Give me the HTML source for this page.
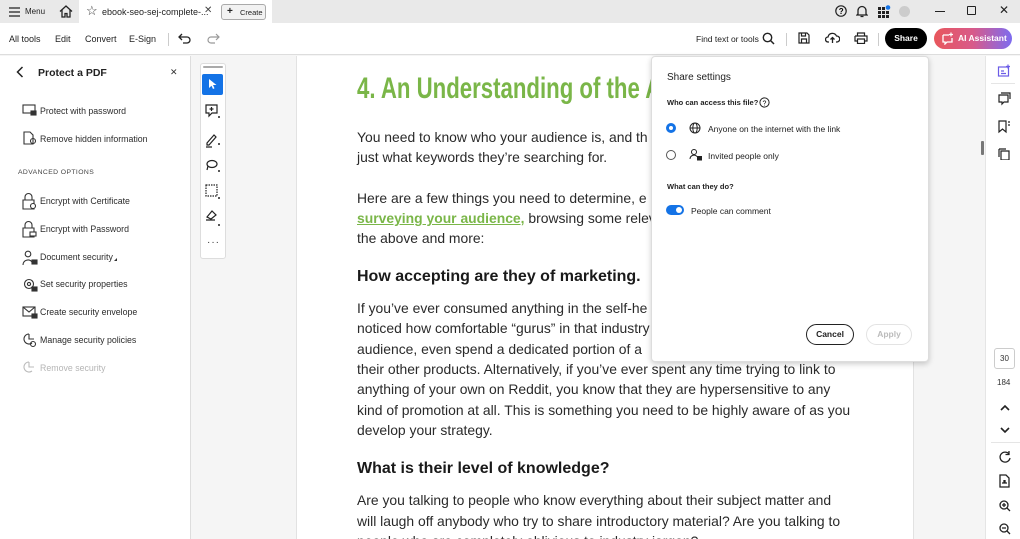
<!DOCTYPE html>
<html><head><meta charset="utf-8"><style>
*{margin:0;padding:0;box-sizing:border-box}
html,body{width:1020px;height:539px;overflow:hidden}
body{position:relative;font-family:"Liberation Sans",sans-serif;background:#f5f5f5;color:#222}
.a{position:absolute;white-space:nowrap}
.t{font-size:8.5px;color:#222}
.s{font-size:8.8px;color:#2c2c2c}
.p{font-size:13.9px;color:#2a2a2a}
.h{font-size:16px;font-weight:bold;color:#1a1a1a}
svg{position:absolute}
</style></head><body>
<div class="a" style="left:0;top:0;width:1020px;height:23px;background:#e9e9e9"></div>
<div class="a" style="left:79px;top:0;width:193px;height:23px;background:#fff"></div>
<svg style="left:9px;top:7px" width="12" height="10"><path d="M0 1h11M0 5h11M0 9h11" stroke="#222" stroke-width="1.3"/></svg>
<div class="a t" style="left:25px;top:7px;font-size:8px">Menu</div>
<svg style="left:59px;top:5px" width="14" height="13"><path d="M1 6.5L7 1l6 5.5M3 5v7h3V8.5h2V12h3V5" fill="none" stroke="#222" stroke-width="1.3"/></svg>
<div class="a" style="left:86px;top:3px;font-size:13px;color:#333">☆</div>
<div class="a t" style="left:102px;top:7px;font-size:9px">ebook-seo-sej-complete-...</div>
<div class="a" style="left:204px;top:5px;font-size:10px;color:#444">✕</div>
<div class="a" style="left:221px;top:4px;width:45px;height:16px;border:1px solid #aaa;border-radius:3px;background:#f2f2f2"></div>
<div class="a t" style="left:227px;top:6px;font-size:10px;font-weight:bold">+</div>
<div class="a t" style="left:240px;top:8px;font-size:7.5px">Create</div>
<svg style="left:835px;top:5px" width="12" height="12"><circle cx="6" cy="6" r="5.2" fill="none" stroke="#222" stroke-width="1.2"/><text x="3.7" y="9" font-size="8" font-family="Liberation Sans" font-weight="bold">?</text></svg>
<svg style="left:856px;top:5px" width="12" height="13"><path d="M2 9V5.5a4 4 0 0 1 8 0V9l1 1H1zM4.5 11.5h3" fill="none" stroke="#222" stroke-width="1.3"/></svg>
<svg style="left:878px;top:5px" width="13" height="13"><g fill="#222"><rect x="0" y="2" width="3" height="3"/><rect x="4" y="2" width="3" height="3"/><rect x="0" y="6" width="3" height="3"/><rect x="4" y="6" width="3" height="3"/><rect x="8" y="6" width="3" height="3"/><rect x="0" y="10" width="3" height="3"/><rect x="4" y="10" width="3" height="3"/><rect x="8" y="10" width="3" height="3"/></g><circle cx="10" cy="2.5" r="2.3" fill="#1473e6"/></svg>
<div class="a" style="left:899px;top:6px;width:11px;height:11px;border-radius:50%;background:#ccc"></div>
<div class="a" style="left:935px;top:11px;width:10px;height:1.2px;background:#222"></div>
<div class="a" style="left:967px;top:6px;width:9px;height:9px;border:1.2px solid #222;border-radius:1px"></div>
<div class="a" style="left:999px;top:3px;font-size:12px;color:#222">✕</div>
<div class="a" style="left:0;top:23px;width:1020px;height:32px;background:#fff;border-bottom:1px solid #ddd"></div>
<div class="a t" style="left:9px;top:34px;font-size:9px">All tools</div>
<div class="a t" style="left:55px;top:34px;font-size:9px">Edit</div>
<div class="a t" style="left:85px;top:34px;font-size:9px">Convert</div>
<div class="a t" style="left:129px;top:34px;font-size:9px">E-Sign</div>
<div class="a" style="left:168px;top:33px;width:1px;height:13px;background:#ccc"></div>
<svg style="left:178px;top:33px" width="14" height="11"><path d="M4 1L1 4l3 3M1 4h8a3 3 0 0 1 0 6H5" fill="none" stroke="#222" stroke-width="1.3"/></svg>
<svg style="left:206px;top:33px" width="14" height="11"><path d="M10 1l3 3-3 3M13 4H5a3 3 0 0 0 0 6h4" fill="none" stroke="#999" stroke-width="1.2"/></svg>
<div class="a t" style="left:696px;top:34px;font-size:8.5px">Find text or tools</div>
<svg style="left:762px;top:32px" width="13" height="13"><circle cx="5.5" cy="5.5" r="4.2" fill="none" stroke="#222" stroke-width="1.4"/><path d="M8.5 8.5l3.5 3.5" stroke="#222" stroke-width="1.5"/></svg>
<div class="a" style="left:786px;top:33px;width:1px;height:13px;background:#ccc"></div>
<svg style="left:798px;top:32px" width="12" height="12"><path d="M1 1h8l2 2v8H1zM3.5 1v3h4V1M3.5 11V7h5v4" fill="none" stroke="#222" stroke-width="1.2"/></svg>
<svg style="left:825px;top:32px" width="15" height="12"><path d="M4 10H3a2.5 2.5 0 0 1 0-5 4.5 4.5 0 0 1 8.5-1A3 3 0 0 1 12 10h-1M7.5 11V5.5M5.5 7.5l2-2 2 2" fill="none" stroke="#222" stroke-width="1.3"/></svg>
<svg style="left:854px;top:32px" width="14" height="12"><path d="M3.5 4V1h7v3M1 4h12v5h-2.5M3.5 9H1V4M3.5 7h7v4.5h-7z" fill="none" stroke="#222" stroke-width="1.2"/></svg>
<div class="a" style="left:878px;top:33px;width:1px;height:13px;background:#ccc"></div>
<div class="a" style="left:885px;top:28px;width:42px;height:21px;border-radius:11px;background:#000;color:#fff;font-size:8.5px;font-weight:bold;text-align:center;line-height:21px">Share</div>
<div class="a" style="left:934px;top:28px;width:78px;height:21px;border-radius:11px;background:linear-gradient(90deg,#e8575c,#d85a8a 50%,#7d6cf0);color:#fff;font-size:8.5px;font-weight:bold;line-height:21px;padding-left:24px">AI Assistant</div>
<svg style="left:941px;top:32px" width="13" height="13"><path d="M2 3h6M2 3v7h2v2l2-2h5V6" fill="none" stroke="#fff" stroke-width="1.3"/><path d="M10 0.5v4M8 2.5h4" stroke="#fff" stroke-width="1.2"/></svg>
<div class="a" style="left:0;top:56px;width:191px;height:483px;background:#fff;border-right:1px solid #ddd"></div>
<svg style="left:16px;top:66px" width="8" height="12"><path d="M6.5 1L1.5 6l5 5" fill="none" stroke="#222" stroke-width="1.5"/></svg>
<div class="a" style="left:38px;top:67px;font-size:10.5px;font-weight:bold;color:#222">Protect a PDF</div>
<div class="a" style="left:170px;top:67px;font-size:9px;color:#333">✕</div>
<div class="a" style="left:18px;top:169px;font-size:6.8px;color:#444;letter-spacing:0.4px">ADVANCED OPTIONS</div>
<div class="a s" style="left:40px;top:106px">Protect with password</div>
<div class="a s" style="left:40px;top:134px">Remove hidden information</div>
<div class="a s" style="left:40px;top:196px">Encrypt with Certificate</div>
<div class="a s" style="left:40px;top:224px">Encrypt with Password</div>
<div class="a s" style="left:40px;top:252px">Document security</div>
<div class="a" style="left:114px;top:258px;width:0;height:0;border-left:3px solid transparent;border-bottom:3px solid #333"></div>
<div class="a s" style="left:40px;top:279px">Set security properties</div>
<div class="a s" style="left:40px;top:307px">Create security envelope</div>
<div class="a s" style="left:40px;top:335px">Manage security policies</div>
<div class="a s" style="left:40px;top:363px;color:#b5b5b5">Remove security</div>
<svg style="left:22px;top:104px" width="16" height="280" fill="none" stroke="#333" stroke-width="1.1">
<rect x="1" y="1" width="12" height="8"/><rect x="9" y="7" width="5" height="4" fill="#333"/>
<path d="M2 28h6l3 3v9H2z"/><circle cx="11" cy="37" r="2.5"/>
<path d="M3 96v-3a3.5 3.5 0 0 1 7 0v3M1 96h11v9H1z"/><circle cx="11" cy="102" r="2.5" fill="#fff"/>
<path d="M3 124v-3a3.5 3.5 0 0 1 7 0v3M1 124h11v9H1z"/><rect x="8" y="128" width="6" height="4" fill="#fff"/>
<circle cx="6" cy="150" r="2.8"/><path d="M1 161a5 5 0 0 1 9 -3"/><rect x="10" y="156" width="5" height="4" fill="#333"/>
<circle cx="7" cy="180" r="4.5"/><circle cx="7" cy="180" r="1.6"/><rect x="10" y="183" width="5" height="4" fill="#333"/>
<rect x="1" y="203" width="12" height="9"/><path d="M1 203l6 5 6-5"/><rect x="10" y="210" width="5" height="4" fill="#333"/>
<path d="M7 230a5 5 0 1 0 3 9"/><path d="M7 230v5h5"/><circle cx="11" cy="240" r="2.5"/>
<path d="M7 258a5 5 0 1 0 3 9M7 258v5h5" stroke="#bbb"/>
</svg>
<div class="a" style="left:200px;top:63px;width:26px;height:196px;background:#fff;border:1px solid #ddd;border-radius:3px"></div>
<div class="a" style="left:203px;top:66px;width:20px;height:2px;background:#aaa;border-radius:1px"></div>
<div class="a" style="left:202px;top:74px;width:21px;height:21px;background:#1473e6;border-radius:2px"></div>
<svg style="left:207px;top:78px" width="12" height="13"><path d="M2 1v9l2.5-2.3L6 11l1.5-.7L6 7h3.5z" fill="#fff"/></svg>
<svg style="left:204px;top:103px" width="18" height="130" fill="none" stroke="#222" stroke-width="1.2">
<path d="M2 2h11v8H8l-3 3v-3H2z"/><path d="M7.5 4v4M5.5 6h4"/>
<path d="M3 40l7-8 2 2-7 8H3zM2 44h6"/>
<ellipse cx="8" cy="61" rx="5" ry="3.5"/><path d="M4 63l-1 4"/>
<rect x="2" y="82" width="11" height="11" stroke-dasharray="1.5 1"/>
<path d="M3 114l5-6 4 4-5 4zM2 117h9"/>
<path d="M14 14l2 0M14 41h2M14 68h2M14 95h2M14 122h2" stroke-width="1.5"/>
</svg>
<div class="a" style="left:207px;top:237px;font-size:10px;color:#333;letter-spacing:1px">···</div>
<div class="a" style="left:296px;top:56px;width:618px;height:483px;background:#fff;border-left:1px solid #e2e2e2;border-right:1px solid #e2e2e2"></div>
<div class="a" style="left:357px;top:72px;font-size:30px;font-weight:bold;color:#7ab648;transform:scaleX(0.74);transform-origin:0 0">4. An Understanding of the Audience</div>
<div class="a p" style="left:357px;top:129px">You need to know who your audience is, and th</div>
<div class="a p" style="left:357px;top:149px">just what keywords they’re searching for.</div>
<div class="a p" style="left:357px;top:190px">Here are a few things you need to determine, e</div>
<div class="a p" style="left:357px;top:210px"><span style="color:#7ab648;font-weight:bold;text-decoration:underline">surveying your audience,</span> browsing some relev</div>
<div class="a p" style="left:357px;top:230px">the above and more:</div>
<div class="a h" style="left:357px;top:268px">How accepting are they of marketing.</div>
<div class="a p" style="left:357px;top:300px">If you’ve ever consumed anything in the self-he</div>
<div class="a p" style="left:357px;top:320px">noticed how comfortable “gurus” in that industry</div>
<div class="a p" style="left:357px;top:341px">audience, even spend a dedicated portion of a</div>
<div class="a p" style="left:357px;top:361px">their other products. Alternatively, if you’ve ever spent any time trying to link to</div>
<div class="a p" style="left:357px;top:381px">anything of your own on Reddit, you know that they are hypersensitive to any</div>
<div class="a p" style="left:357px;top:402px">kind of promotion at all. This is something you need to be highly aware of as you</div>
<div class="a p" style="left:357px;top:422px">develop your strategy.</div>
<div class="a h" style="left:357px;top:460px">What is their level of knowledge?</div>
<div class="a p" style="left:357px;top:492px">Are you talking to people who know everything about their subject matter and</div>
<div class="a p" style="left:357px;top:513px">will laugh off anybody who try to share introductory material? Are you talking to</div>
<div class="a p" style="left:357px;top:533px">people who are completely oblivious to industry jargon?</div>
<div class="a" style="left:985px;top:56px;width:35px;height:483px;background:#fff;border-left:1px solid #e5e5e5"></div>
<div class="a" style="left:981px;top:141px;width:3px;height:14px;background:#777;border-radius:1px"></div>
<svg style="left:997px;top:64px" width="14" height="96" fill="none" stroke="#222" stroke-width="1.2">
<rect x="1.5" y="3" width="10" height="9" stroke="#6b5ce7"/><path d="M4 7h3M4 9.5h5" stroke="#6b5ce7"/><path d="M11 0.5v4M9 2.5h4" stroke="#6b5ce7"/>
<path d="M2 31h9v7H7l-2 2v-2H2z"/><path d="M4 29h9v6"/>
<path d="M2 57h7v11l-3.5-3-3.5 3zM11 58h2M11 61h2"/>
<path d="M4 87h8v9H4zM2 85v8M2 85h7"/>
</svg>
<div class="a" style="left:991px;top:83px;width:24px;height:1px;background:#e5e5e5"></div>
<div class="a" style="left:994px;top:348px;width:21px;height:21px;border:1px solid #ccc;border-radius:3px;font-size:8px;text-align:center;line-height:19px;color:#333">30</div>
<div class="a" style="left:997px;top:378px;font-size:8px;color:#333">184</div>
<svg style="left:999px;top:402px" width="12" height="34" fill="none" stroke="#222" stroke-width="1.6"><path d="M2 8l4-4 4 4M2 26l4 4 4-4"/></svg>
<div class="a" style="left:991px;top:442px;width:29px;height:1px;background:#e5e5e5"></div>
<svg style="left:998px;top:450px" width="14" height="85" fill="none" stroke="#222" stroke-width="1.3">
<path d="M11 4a5 5 0 1 0 1 4M11 1v3.5H7.5"/>
<path d="M2 25h6l3 3v9H2zM4 33h2v-3M7 30v3h2"/>
<circle cx="6" cy="55" r="4"/><path d="M9 58l3 3M4 55h4M6 53v4"/>
<circle cx="6" cy="78" r="4"/><path d="M9 81l3 3M4 78h4"/>
</svg>
<div class="a" style="left:651px;top:56px;width:278px;height:306px;background:#fff;border:1px solid #ddd;border-radius:4px;box-shadow:0 2px 6px rgba(0,0,0,0.2)"></div>
<div class="a" style="left:667px;top:72px;font-size:10px;color:#222">Share settings</div>
<div class="a" style="left:667px;top:98px;font-size:7.5px;font-weight:bold;color:#222">Who can access this file?</div>
<svg style="left:759px;top:97px" width="11" height="11"><circle cx="5.5" cy="5.5" r="4.6" fill="none" stroke="#222" stroke-width="1"/><text x="3.5" y="8.3" font-size="7" font-family="Liberation Sans">?</text></svg>
<div class="a" style="left:666px;top:123px;width:10px;height:10px;border-radius:50%;background:#1473e6"></div>
<div class="a" style="left:669px;top:126px;width:4px;height:4px;border-radius:50%;background:#fff"></div>
<svg style="left:689px;top:122px" width="12" height="12" fill="none" stroke="#222" stroke-width="1"><circle cx="6" cy="6" r="5"/><ellipse cx="6" cy="6" rx="2.2" ry="5"/><path d="M1 6h10"/></svg>
<div class="a" style="left:708px;top:124px;font-size:8.5px;color:#222">Anyone on the internet with the link</div>
<div class="a" style="left:666px;top:150px;width:10px;height:10px;border-radius:50%;border:1px solid #555"></div>
<svg style="left:689px;top:148px" width="13" height="13" fill="none" stroke="#222" stroke-width="1"><circle cx="5" cy="4" r="2.5"/><path d="M1 11a4 4 0 0 1 7-2.5"/><rect x="8.5" y="8.5" width="4" height="3.5" fill="#222"/></svg>
<div class="a" style="left:708px;top:151px;font-size:8.5px;color:#222">Invited people only</div>
<div class="a" style="left:667px;top:182px;font-size:7.5px;font-weight:bold;color:#222">What can they do?</div>
<div class="a" style="left:666px;top:205px;width:18px;height:10px;border-radius:5px;background:#1473e6"></div>
<div class="a" style="left:676px;top:207px;width:6px;height:6px;border-radius:50%;background:#fff"></div>
<div class="a" style="left:691px;top:206px;font-size:8.5px;color:#222">People can comment</div>
<div class="a" style="left:806px;top:324px;width:48px;height:21px;border:1.5px solid #222;border-radius:11px;font-size:8.5px;font-weight:bold;text-align:center;line-height:18px;color:#222">Cancel</div>
<div class="a" style="left:866px;top:324px;width:46px;height:21px;border:1px solid #e3e3e3;border-radius:11px;font-size:8.5px;font-weight:bold;text-align:center;line-height:19px;color:#bbb">Apply</div>
</body></html>
